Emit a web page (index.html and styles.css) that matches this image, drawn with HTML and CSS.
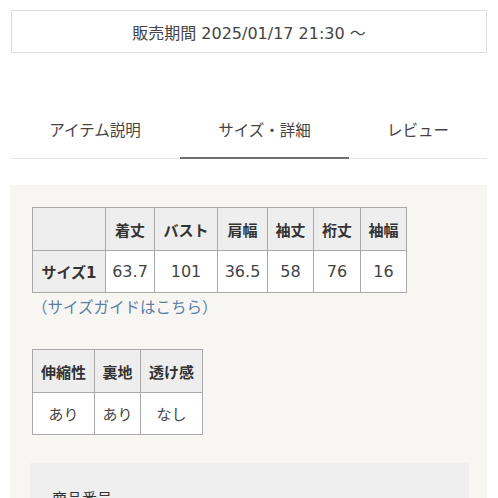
FILE: index.html
```html
<!DOCTYPE html>
<html lang="ja">
<head>
<meta charset="utf-8">
<link rel="stylesheet" href="styles.css">
</head>
<body>
<div class="page">
  <div class="period">販売期間 2025/01/17 21:30 ～</div>
  <div class="tabs">
    <div class="tab">アイテム説明</div>
    <div class="tab active">サイズ・詳細</div>
    <div class="tab">レビュー</div>
  </div>
  <div class="panel">
    <table class="size-table">
      <colgroup>
        <col class="c73"><col class="c49"><col class="c63"><col class="c50"><col class="c46"><col class="c47"><col class="c46">
      </colgroup>
      <tr class="head"><th></th><th>着丈</th><th>バスト</th><th>肩幅</th><th>袖丈</th><th>裄丈</th><th>袖幅</th></tr>
      <tr class="data"><th>サイズ1</th><td>63.7</td><td>101</td><td>36.5</td><td>58</td><td>76</td><td>16</td></tr>
    </table>
    <div class="guide">（サイズガイドはこちら）</div>
    <table class="feel-table">
      <colgroup><col class="c62"><col class="c46"><col class="c62"></colgroup>
      <tr class="head"><th>伸縮性</th><th>裏地</th><th>透け感</th></tr>
      <tr class="data"><td>あり</td><td>あり</td><td>なし</td></tr>
    </table>
    <div class="info">商品番号</div>
  </div>
</div>
</body>
</html>
```
FILE: styles.css
```css
html, body {
  margin: 0;
  padding: 0;
  background: #ffffff;
}
body {
  font-family: "DejaVu Sans", "Noto Sans CJK JP", sans-serif;
  color: #3a3a3a;
  font-size: 15px;
}
.page {
  padding: 10px 11px 0 10px;
}
.period {
  margin-left: 1px;
  height: 41px;
  border: 1px solid #dedede;
  display: flex;
  align-items: center;
  justify-content: center;
  font-size: 16px;
  color: #444;
}
.tabs {
  margin-top: 47px;
  display: grid;
  grid-template-columns: 170px 169px 1fr;
  border-bottom: 1px solid #e6e6e6;
}
.tab {
  height: 58px;
  display: flex;
  align-items: center;
  justify-content: center;
  font-size: 15.5px;
  color: #444;
  padding-bottom: 1px;
  box-sizing: border-box;
}
.tab.active {
  position: relative;
}
.tab.active::after {
  content: "";
  position: absolute;
  left: 0;
  right: 0;
  bottom: -1px;
  height: 2px;
  background: #707070;
}
.panel {
  margin-top: 26px;
  background: #f8f6f3;
  padding: 22px 18px 0 20px;
  height: 320px;
}
table {
  border-collapse: collapse;
  table-layout: fixed;
  margin-left: 2px;
}
th, td {
  border: 1px solid #a9a9a9;
  padding: 0;
  text-align: center;
  font-size: 15px;
}
th {
  background: #eeeeee;
  font-weight: bold;
  color: #333;
}
td {
  background: #ffffff;
  color: #444;
  font-weight: normal;
}
.size-table td {
  font-size: 16px;
}
.head th, .head td { height: 42px; }
.data th, .data td { height: 41px; }
.c73 { width: 73px; }
.c49 { width: 49px; }
.c63 { width: 63px; }
.c50 { width: 50px; }
.c46 { width: 46px; }
.c47 { width: 47px; }
.c62 { width: 62px; }
.guide {
  margin-left: 2px;
  height: 30px;
  line-height: 30px;
  font-size: 15.5px;
  color: #5b7ea6;
}
.feel-table {
  margin-top: 26px;
}
.info {
  margin-top: 28px;
  background: #efefef;
  padding: 24px 22px 0;
  height: 60px;
  font-size: 15px;
  color: #333;
}
```
